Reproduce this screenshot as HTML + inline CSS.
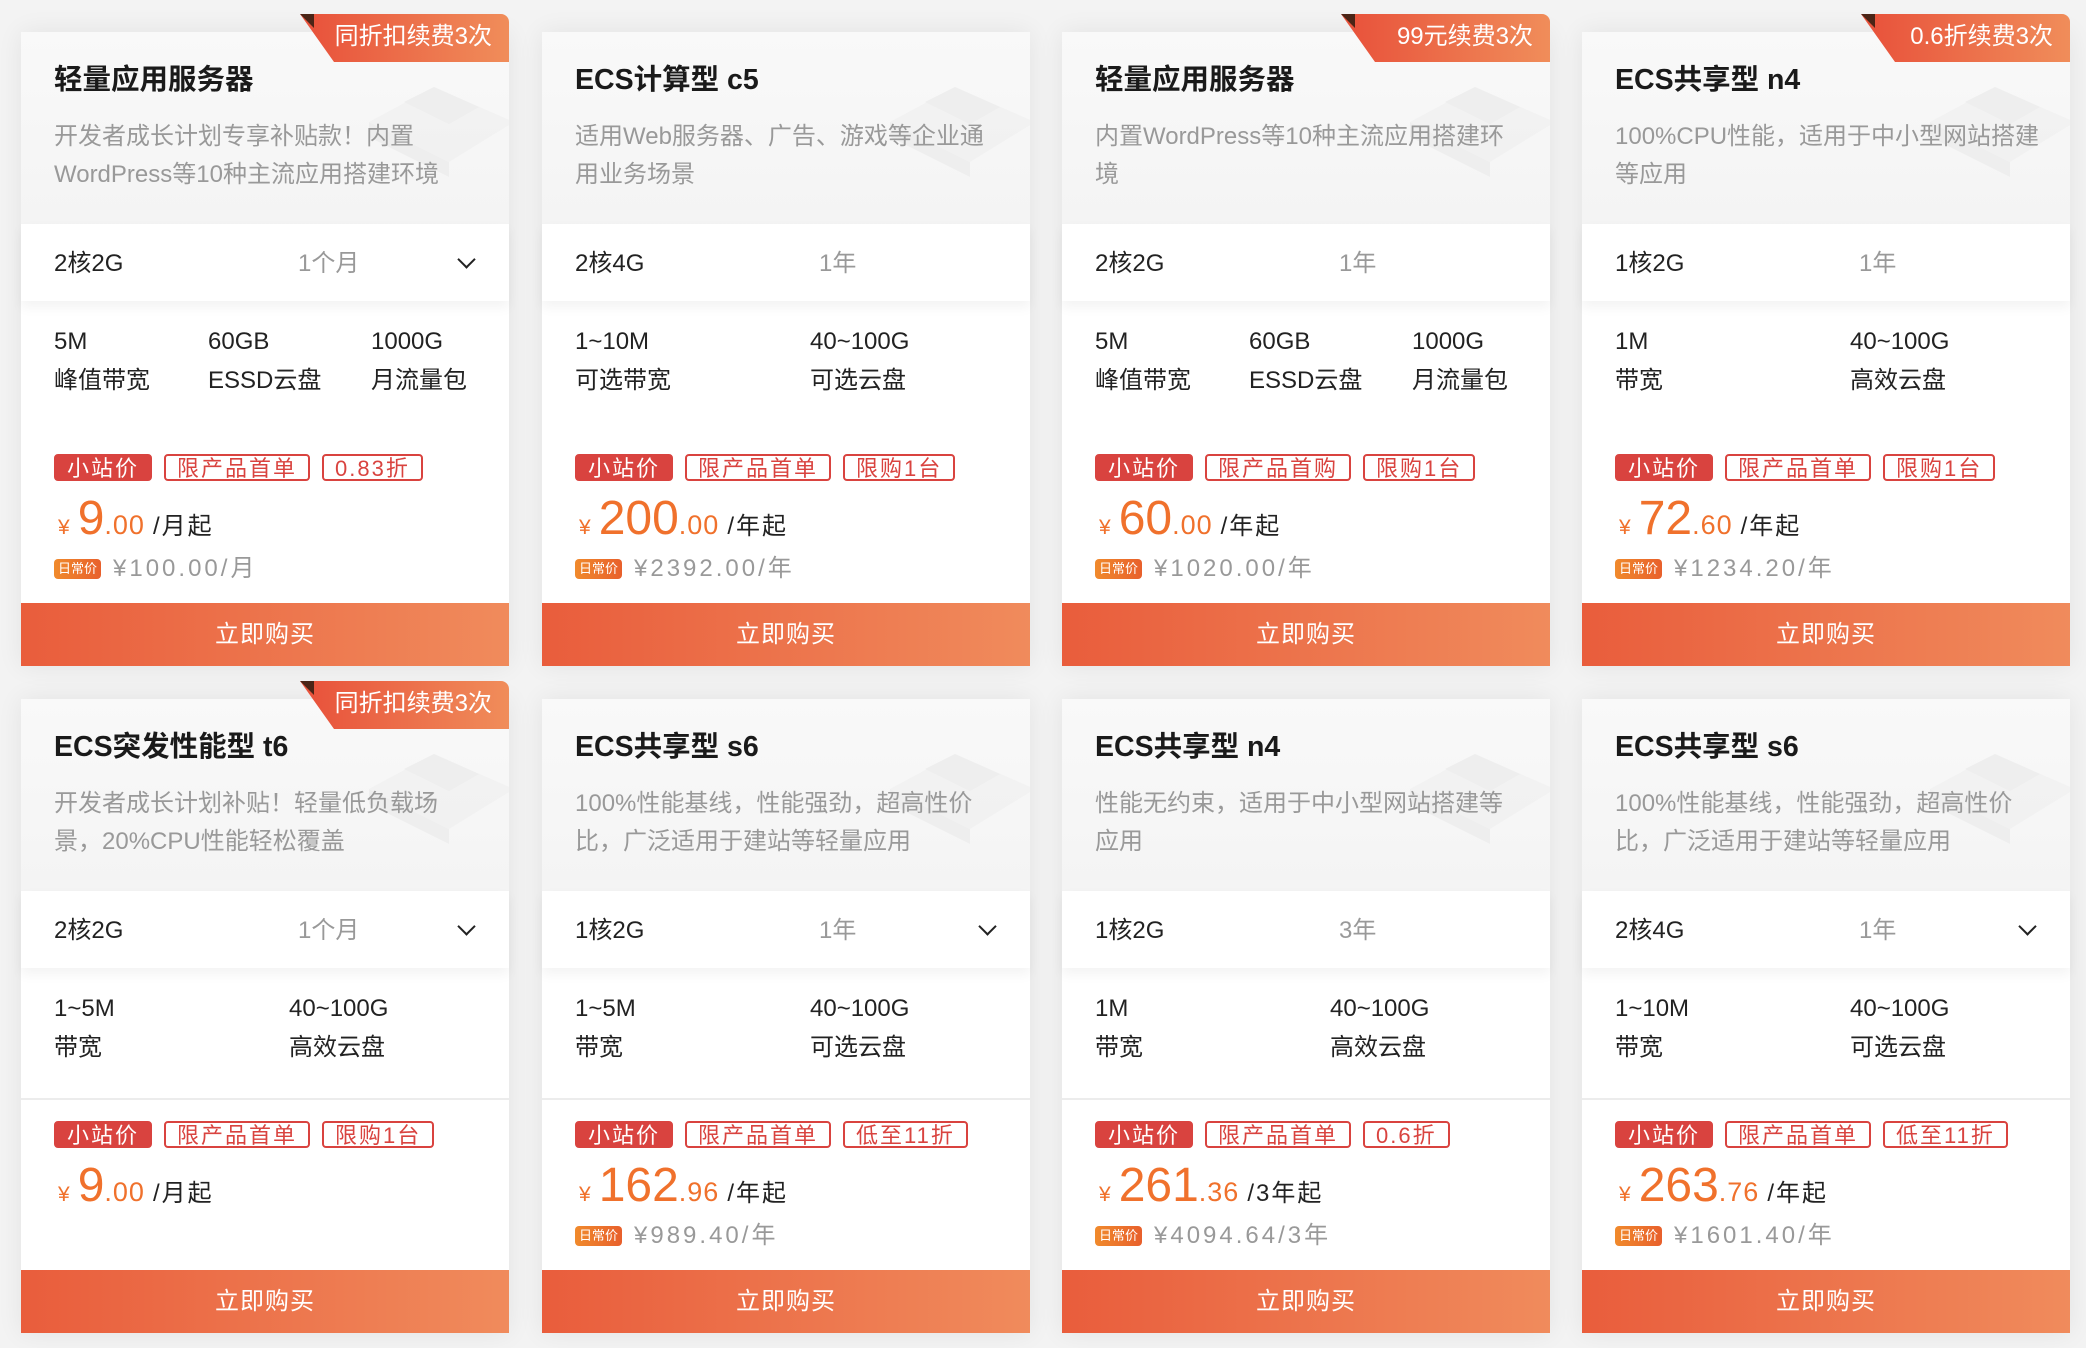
<!DOCTYPE html>
<html><head><meta charset="utf-8"><style>
*{margin:0;padding:0;box-sizing:border-box}
body{width:2086px;height:1348px;background:#f3f3f3;font-family:"Liberation Sans","Noto Sans CJK SC",sans-serif;position:relative;overflow:hidden}
.c{position:absolute;width:488px;height:634px;background:#fff;box-shadow:0 0 24px rgba(0,0,0,.07)}
.h{position:absolute;left:0;top:0;width:488px;height:192px;background:linear-gradient(180deg,#f9f9f9,#f4f4f4);overflow:hidden}
.srv{position:absolute;right:-10px;top:30px;width:170px;height:120px;opacity:.5}
.t{position:absolute;left:33px;top:30px;font-size:28.5px;font-weight:bold;color:#1a1a1a;line-height:36px;white-space:nowrap}
.d{position:absolute;left:33px;top:86px;width:440px;font-size:24px;color:#999;line-height:38px}
.b{position:absolute;right:0;top:-18px;width:209px;height:48px;color:#fff;font-size:24px;line-height:46px;text-align:right;padding-right:17px;background:linear-gradient(90deg,#e8503a,#f08d5a);clip-path:polygon(0 0,100% 0,100% 100%,34px 100%,0 0);border-top-right-radius:8px}
.b:before{content:"";position:absolute;left:0;top:0;width:14px;height:14px;background:#4a2416;clip-path:polygon(0 0,100% 0,100% 100%)}
.s{position:absolute;left:0;top:192px;width:488px;height:77px;background:#fff;box-shadow:0 6px 12px rgba(0,0,0,.05);font-size:24px;line-height:80px;color:#222}
.s .a{position:absolute;left:33px}.s .p{position:absolute;left:277px;color:#999}
.s .v{position:absolute;left:439px;top:29px;width:13px;height:13px;border-right:2.5px solid #222;border-bottom:2.5px solid #222;transform:rotate(45deg)}
.sp{position:absolute;top:290px;font-size:24px;line-height:39px;color:#222;white-space:nowrap}
.ln{position:absolute;left:0;top:399px;width:488px;height:2px;background:#ececec}
.tg{position:absolute;left:33px;top:422px;white-space:nowrap;font-size:0}
.tg span{display:inline-block;height:27px;line-height:25px;font-size:22px;padding:0 11px;letter-spacing:2px;border:2px solid #d9433f;color:#d9433f;border-radius:4px;margin-right:12px}
.tg span:first-child{background:#d9433f;color:#fff}
.pr{position:absolute;left:33px;top:460px;color:#f0712c;white-space:nowrap;line-height:54px}
.pr .y{font-size:21px;margin-left:4px}.pr .n{font-size:48px;margin-left:8px}.pr .f{font-size:27px;letter-spacing:1px}.pr .u{font-size:24px;color:#222;margin-left:8px;letter-spacing:2px}
.rg{position:absolute;left:33px;top:523px;font-size:24px;color:#999;white-space:nowrap;line-height:28px;letter-spacing:3px}
.rg i{font-style:normal;display:inline-block;background:linear-gradient(90deg,#f08a2c,#e8602c);color:#fff;font-size:13px;line-height:20px;height:20px;padding:0 4px;border-radius:4px;vertical-align:3px;margin-right:12px;letter-spacing:0}
.bt{position:absolute;left:0;top:571px;width:488px;height:63px;background:linear-gradient(90deg,#e95d3c,#f08b5c);color:#fff;font-size:24px;text-align:center;line-height:63px;letter-spacing:1px}
</style></head><body>

<div class="c" style="left:21px;top:32px">
<div class="h"><svg class="srv" viewBox="0 0 170 120"><path d="M20 60 L85 25 L165 60 L100 100 Z" fill="#eee"/><path d="M20 60 L20 75 L100 115 L100 100 Z" fill="#e8e8e8"/><path d="M55 40 L85 25 L130 45 L100 62Z" fill="#e6e6e6"/></svg></div>
<div class="b">同折扣续费3次</div>
<div class="t">轻量应用服务器</div>
<div class="d">开发者成长计划专享补贴款！内置<br>WordPress等10种主流应用搭建环境</div>
<div class="s"><span class="a">2核2G</span><span class="p" style="left:277px">1个月</span><i class="v"></i></div>
<div class="sp" style="left:33px">5M<br>峰值带宽</div><div class="sp" style="left:187px">60GB<br>ESSD云盘</div><div class="sp" style="left:350px">1000G<br>月流量包</div>
<div class="tg"><span>小站价</span><span>限产品首单</span><span>0.83折</span></div>
<div class="pr"><span class="y">¥</span><span class="n">9</span><span class="f">.00</span><span class="u">/月起</span></div>
<div class="rg"><i>日常价</i>¥100.00/月</div>
<div class="bt">立即购买</div></div>

<div class="c" style="left:542px;top:32px">
<div class="h"><svg class="srv" viewBox="0 0 170 120"><path d="M20 60 L85 25 L165 60 L100 100 Z" fill="#eee"/><path d="M20 60 L20 75 L100 115 L100 100 Z" fill="#e8e8e8"/><path d="M55 40 L85 25 L130 45 L100 62Z" fill="#e6e6e6"/></svg></div>
<div class="t">ECS计算型 c5</div>
<div class="d">适用Web服务器、广告、游戏等企业通<br>用业务场景</div>
<div class="s"><span class="a">2核4G</span><span class="p">1年</span></div>
<div class="sp" style="left:33px">1~10M<br>可选带宽</div><div class="sp" style="left:268px">40~100G<br>可选云盘</div>
<div class="tg"><span>小站价</span><span>限产品首单</span><span>限购1台</span></div>
<div class="pr"><span class="y">¥</span><span class="n">200</span><span class="f">.00</span><span class="u">/年起</span></div>
<div class="rg"><i>日常价</i>¥2392.00/年</div>
<div class="bt">立即购买</div></div>

<div class="c" style="left:1062px;top:32px">
<div class="h"><svg class="srv" viewBox="0 0 170 120"><path d="M20 60 L85 25 L165 60 L100 100 Z" fill="#eee"/><path d="M20 60 L20 75 L100 115 L100 100 Z" fill="#e8e8e8"/><path d="M55 40 L85 25 L130 45 L100 62Z" fill="#e6e6e6"/></svg></div>
<div class="b">99元续费3次</div>
<div class="t">轻量应用服务器</div>
<div class="d">内置WordPress等10种主流应用搭建环<br>境</div>
<div class="s"><span class="a">2核2G</span><span class="p">1年</span></div>
<div class="sp" style="left:33px">5M<br>峰值带宽</div><div class="sp" style="left:187px">60GB<br>ESSD云盘</div><div class="sp" style="left:350px">1000G<br>月流量包</div>
<div class="tg"><span>小站价</span><span>限产品首购</span><span>限购1台</span></div>
<div class="pr"><span class="y">¥</span><span class="n">60</span><span class="f">.00</span><span class="u">/年起</span></div>
<div class="rg"><i>日常价</i>¥1020.00/年</div>
<div class="bt">立即购买</div></div>

<div class="c" style="left:1582px;top:32px">
<div class="h"><svg class="srv" viewBox="0 0 170 120"><path d="M20 60 L85 25 L165 60 L100 100 Z" fill="#eee"/><path d="M20 60 L20 75 L100 115 L100 100 Z" fill="#e8e8e8"/><path d="M55 40 L85 25 L130 45 L100 62Z" fill="#e6e6e6"/></svg></div>
<div class="b">0.6折续费3次</div>
<div class="t">ECS共享型 n4</div>
<div class="d">100%CPU性能，适用于中小型网站搭建<br>等应用</div>
<div class="s"><span class="a">1核2G</span><span class="p">1年</span></div>
<div class="sp" style="left:33px">1M<br>带宽</div><div class="sp" style="left:268px">40~100G<br>高效云盘</div>
<div class="tg"><span>小站价</span><span>限产品首单</span><span>限购1台</span></div>
<div class="pr"><span class="y">¥</span><span class="n">72</span><span class="f">.60</span><span class="u">/年起</span></div>
<div class="rg"><i>日常价</i>¥1234.20/年</div>
<div class="bt">立即购买</div></div>

<div class="c" style="left:21px;top:699px">
<div class="h"><svg class="srv" viewBox="0 0 170 120"><path d="M20 60 L85 25 L165 60 L100 100 Z" fill="#eee"/><path d="M20 60 L20 75 L100 115 L100 100 Z" fill="#e8e8e8"/><path d="M55 40 L85 25 L130 45 L100 62Z" fill="#e6e6e6"/></svg></div>
<div class="b">同折扣续费3次</div>
<div class="t">ECS突发性能型 t6</div>
<div class="d">开发者成长计划补贴！轻量低负载场<br>景，20%CPU性能轻松覆盖</div>
<div class="s"><span class="a">2核2G</span><span class="p">1个月</span><i class="v"></i></div>
<div class="sp" style="left:33px">1~5M<br>带宽</div><div class="sp" style="left:268px">40~100G<br>高效云盘</div>
<div class="ln"></div>
<div class="tg"><span>小站价</span><span>限产品首单</span><span>限购1台</span></div>
<div class="pr"><span class="y">¥</span><span class="n">9</span><span class="f">.00</span><span class="u">/月起</span></div>
<div class="bt">立即购买</div></div>

<div class="c" style="left:542px;top:699px">
<div class="h"><svg class="srv" viewBox="0 0 170 120"><path d="M20 60 L85 25 L165 60 L100 100 Z" fill="#eee"/><path d="M20 60 L20 75 L100 115 L100 100 Z" fill="#e8e8e8"/><path d="M55 40 L85 25 L130 45 L100 62Z" fill="#e6e6e6"/></svg></div>
<div class="t">ECS共享型 s6</div>
<div class="d">100%性能基线，性能强劲，超高性价<br>比，广泛适用于建站等轻量应用</div>
<div class="s"><span class="a">1核2G</span><span class="p">1年</span><i class="v"></i></div>
<div class="sp" style="left:33px">1~5M<br>带宽</div><div class="sp" style="left:268px">40~100G<br>可选云盘</div>
<div class="ln"></div>
<div class="tg"><span>小站价</span><span>限产品首单</span><span>低至11折</span></div>
<div class="pr"><span class="y">¥</span><span class="n">162</span><span class="f">.96</span><span class="u">/年起</span></div>
<div class="rg"><i>日常价</i>¥989.40/年</div>
<div class="bt">立即购买</div></div>

<div class="c" style="left:1062px;top:699px">
<div class="h"><svg class="srv" viewBox="0 0 170 120"><path d="M20 60 L85 25 L165 60 L100 100 Z" fill="#eee"/><path d="M20 60 L20 75 L100 115 L100 100 Z" fill="#e8e8e8"/><path d="M55 40 L85 25 L130 45 L100 62Z" fill="#e6e6e6"/></svg></div>
<div class="t">ECS共享型 n4</div>
<div class="d">性能无约束，适用于中小型网站搭建等<br>应用</div>
<div class="s"><span class="a">1核2G</span><span class="p">3年</span></div>
<div class="sp" style="left:33px">1M<br>带宽</div><div class="sp" style="left:268px">40~100G<br>高效云盘</div>
<div class="ln"></div>
<div class="tg"><span>小站价</span><span>限产品首单</span><span>0.6折</span></div>
<div class="pr"><span class="y">¥</span><span class="n">261</span><span class="f">.36</span><span class="u">/3年起</span></div>
<div class="rg"><i>日常价</i>¥4094.64/3年</div>
<div class="bt">立即购买</div></div>

<div class="c" style="left:1582px;top:699px">
<div class="h"><svg class="srv" viewBox="0 0 170 120"><path d="M20 60 L85 25 L165 60 L100 100 Z" fill="#eee"/><path d="M20 60 L20 75 L100 115 L100 100 Z" fill="#e8e8e8"/><path d="M55 40 L85 25 L130 45 L100 62Z" fill="#e6e6e6"/></svg></div>
<div class="t">ECS共享型 s6</div>
<div class="d">100%性能基线，性能强劲，超高性价<br>比，广泛适用于建站等轻量应用</div>
<div class="s"><span class="a">2核4G</span><span class="p">1年</span><i class="v"></i></div>
<div class="sp" style="left:33px">1~10M<br>带宽</div><div class="sp" style="left:268px">40~100G<br>可选云盘</div>
<div class="ln"></div>
<div class="tg"><span>小站价</span><span>限产品首单</span><span>低至11折</span></div>
<div class="pr"><span class="y">¥</span><span class="n">263</span><span class="f">.76</span><span class="u">/年起</span></div>
<div class="rg"><i>日常价</i>¥1601.40/年</div>
<div class="bt">立即购买</div></div>

</body></html>
